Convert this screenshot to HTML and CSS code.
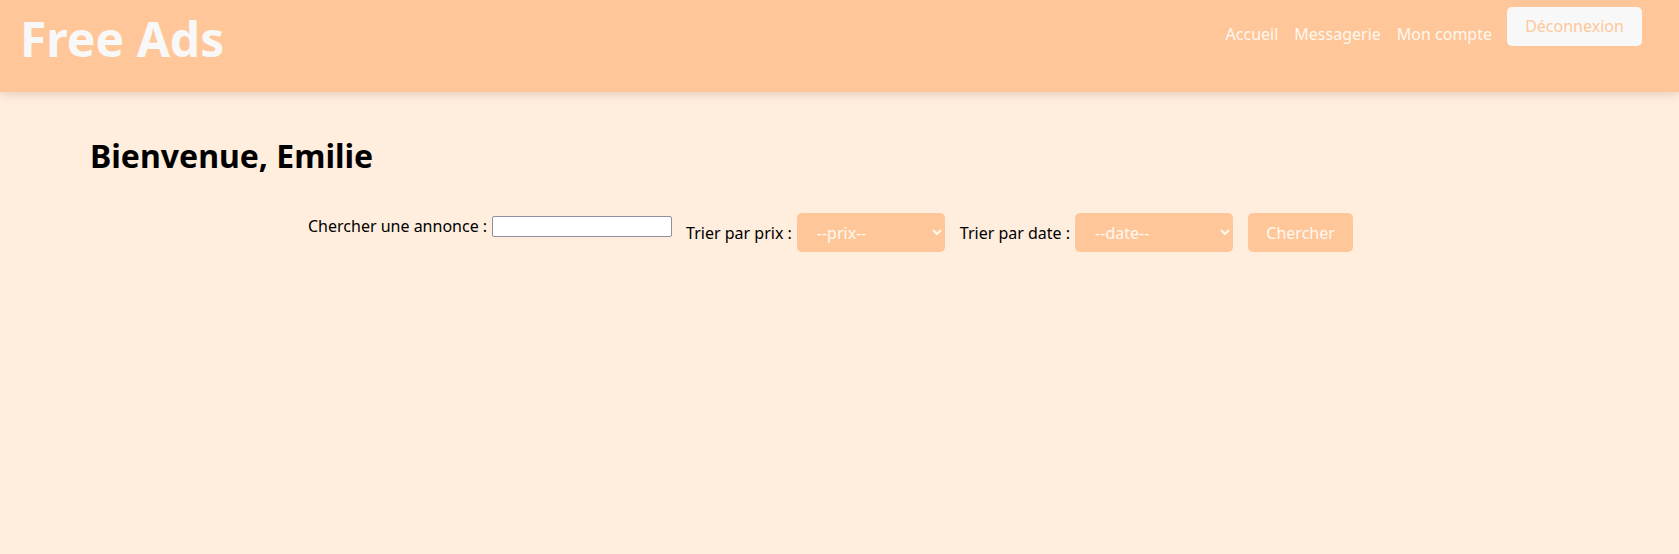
FILE: index.html
```html
<!DOCTYPE html>
<html lang="fr">
<head>
<meta charset="utf-8">
<title>Free Ads</title>
<link rel="stylesheet" href="styles.css">
</head>
<body>
<header class="topbar">
  <div class="brand">Free Ads</div>
  <nav class="nav">
    <ul class="nav-links">
      <li><a href="#">Accueil</a></li>
      <li><a href="#">Messagerie</a></li>
      <li><a href="#">Mon compte</a></li>
    </ul>
    <button class="logout" type="button">Déconnexion</button>
  </nav>
</header>
<main class="content">
  <h1 class="welcome">Bienvenue, Emilie</h1>
  <form class="search">
    <div class="field field-text">
      <label for="q">Chercher une annonce :</label>
      <input id="q" class="text-input" type="text">
    </div>
    <div class="field">
      <label for="prix">Trier par prix :</label>
      <select id="prix" class="pick pick-prix"><option>--prix--</option></select>
    </div>
    <div class="field">
      <label for="date">Trier par date :</label>
      <select id="date" class="pick pick-date"><option>--date--</option></select>
    </div>
    <button class="submit" type="button">Chercher</button>
  </form>
</main>
</body>
</html>
```
FILE: styles.css
```css
html, body {
  margin: 0;
  padding: 0;
}
body {
  background: #ffeddd;
  font-family: "Noto Sans", "Open Sans", sans-serif;
  color: #000;
  min-height: 554px;
}
.topbar {
  height: 92px;
  background: #ffc799;
  box-shadow: 0 2px 8px rgba(150, 110, 70, 0.25);
  display: flex;
  justify-content: space-between;
  align-items: flex-start;
  padding: 0 37px 0 20px;
  box-sizing: border-box;
}
.brand {
  font-size: 48px;
  font-weight: 700;
  color: #f8f8f8;
  line-height: 1;
  margin-top: 15px;
}
.nav {
  display: flex;
  align-items: flex-start;
  gap: 15px;
  padding-top: 7px;
}
.nav-links {
  list-style: none;
  display: flex;
  gap: 16px;
  margin: 0;
  padding: 15px 0 0 0;
}
.nav-links a {
  color: #fdf7f0;
  text-decoration: none;
  font-size: 16px;
  line-height: 24px;
}
.logout {
  width: 135px;
  height: 39px;
  border: none;
  border-radius: 5px;
  background: #f8f8f8;
  color: #ffc799;
  font-family: inherit;
  font-size: 16px;
  padding: 0 0 2px 0;
}
.content {
  padding: 0 0 0 90px;
}
.welcome {
  font-size: 32px;
  font-weight: 700;
  margin: 0;
  padding-top: 42px;
  line-height: 44px;
}
.search {
  display: flex;
  align-items: flex-start;
  margin: 0;
  padding: 35px 0 0 218px;
}
.field {
  display: flex;
  align-items: center;
  gap: 5px;
  margin-right: 15px;
  font-size: 16px;
}
.field label {
  line-height: 22px;
}
.field-text {
  margin-top: 2px;
  margin-right: 14px;
}
.text-input {
  width: 180px;
  height: 21px;
  box-sizing: border-box;
  border: 1px solid #8f8f9d;
  border-radius: 2px;
  background: #fff;
  margin: 0;
  padding: 1px 2px;
}
.pick {
  height: 39px;
  border: none;
  border-radius: 5px;
  background: #ffc799;
  color: #fff8f0;
  font-family: inherit;
  font-size: 16px;
  padding: 0 6px 0 16px;
  margin: 0;
}
.pick-prix { width: 148px; }
.pick-date { width: 158px; }
.submit {
  width: 105px;
  height: 39px;
  border: none;
  border-radius: 5px;
  background: #ffc799;
  color: #fff8f0;
  font-family: inherit;
  font-size: 16px;
  padding: 0;
}
```
